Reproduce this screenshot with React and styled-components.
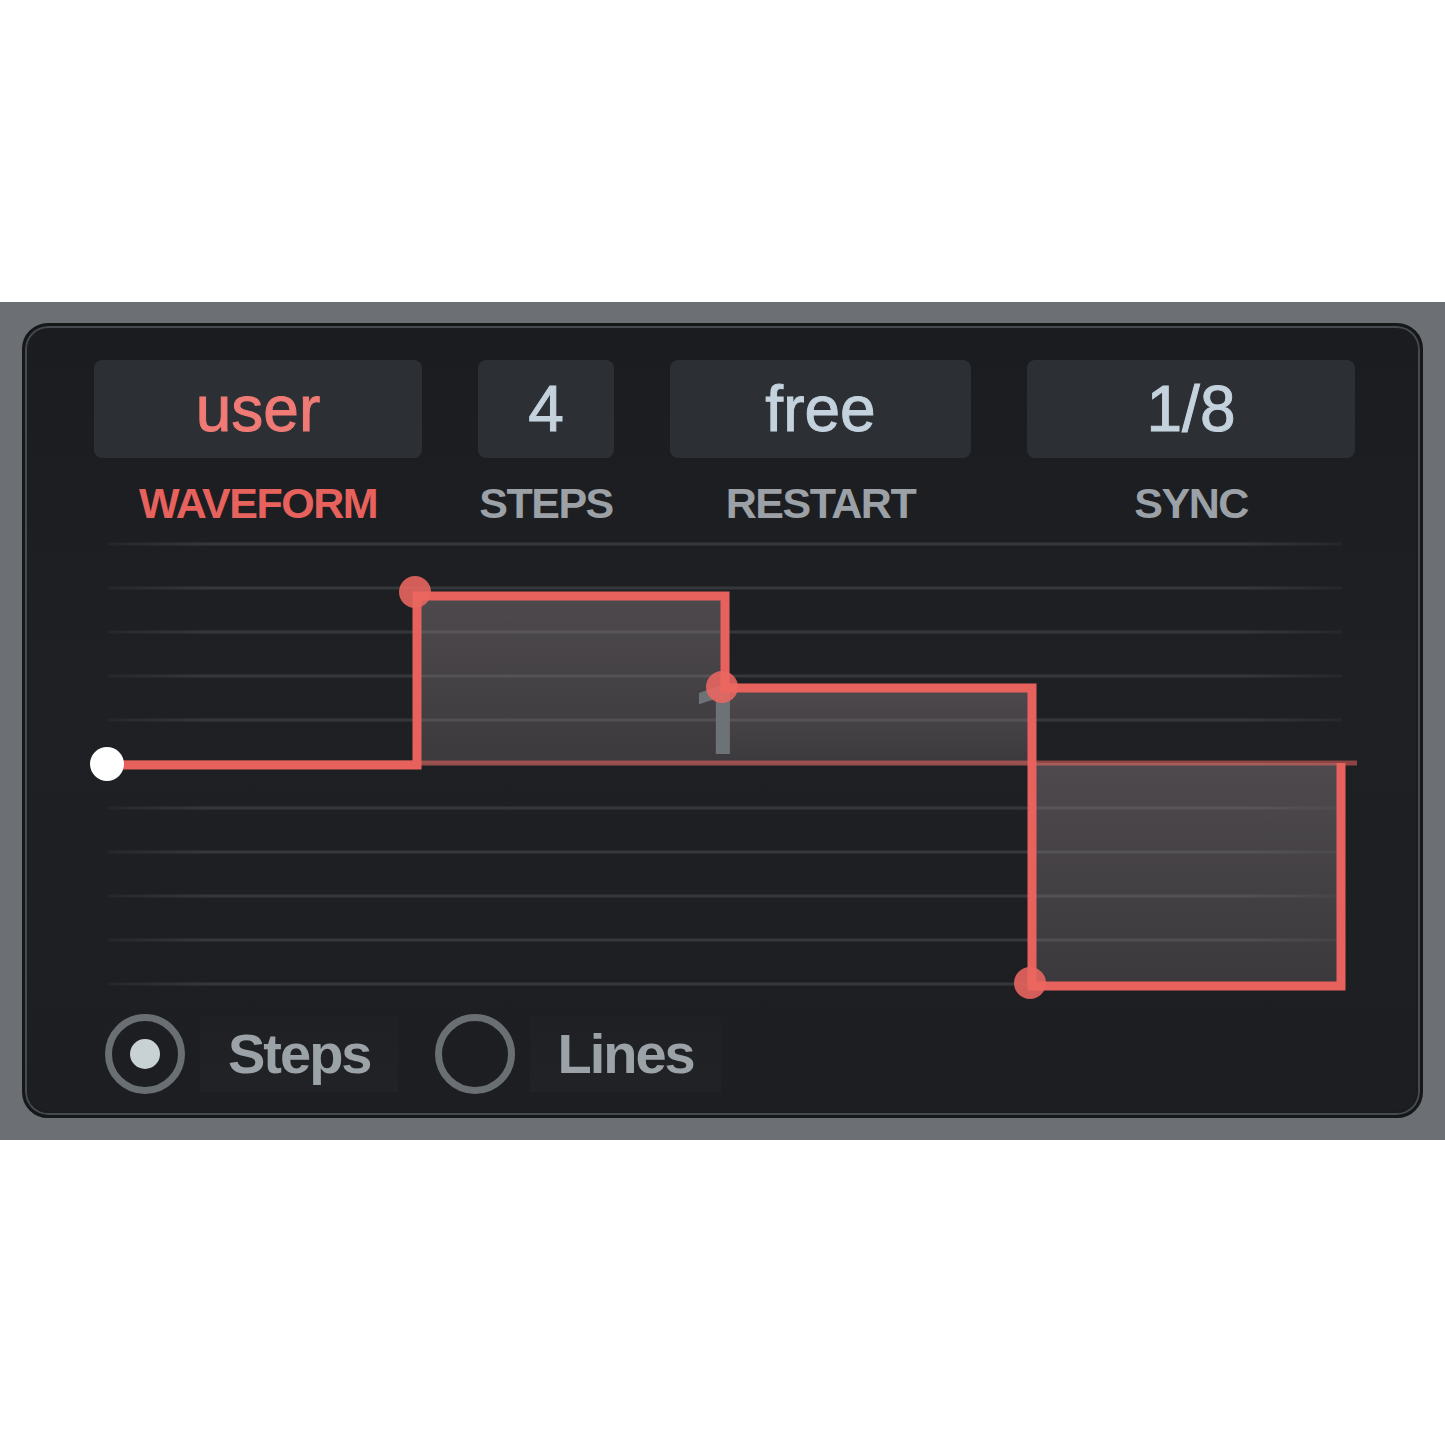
import React from "react";
import styled, { createGlobalStyle } from "styled-components";

const GlobalStyle = createGlobalStyle`
    html, body {
        margin: 0;
        padding: 0;
        background: #ffffff;
    }
    body {
        font-family: "Liberation Sans", Arial, sans-serif;
    }
`;

const CORAL = "#e8625d";

const fields = [
    { value: "user", label: "WAVEFORM", width: 328, active: true },
    { value: "4", label: "STEPS", width: 136 },
    { value: "free", label: "RESTART", width: 301 },
    { value: "1/8", label: "SYNC", width: 328 },
];

// step values are y coordinates of each step's level (page px)
const STEP_X = [107, 417, 725, 1032, 1341];
const STEP_Y = [765, 596, 688, 986];
const ZERO_Y = 763;
const GRID = Array.from({ length: 11 }, (_, i) => 544 + i * 44);

const Band = styled.div`
    margin-top: 302px;
    background: #6c7074;
    padding: 21px 22px 22px;
`;

const Panel = styled.div`
    border: 3px solid #161719;
    border-radius: 26px;
    box-shadow: inset 0 0 0 2px #46494d, inset 0 0 0 4px #1b1c1f;
    background: linear-gradient(180deg, #1b1c1f 0%, #1f2023 45%, #1d1e21 100%);
    padding: 34px 0 21px 65px;
`;

const Header = styled.div`
    display: flex;
    gap: 56px;
    padding-left: 4px;
`;

const Field = styled.div`
    display: flex;
    flex-direction: column;
    align-items: center;
    width: ${(p) => p.$width}px;
`;

const ValueBox = styled.div`
    width: 100%;
    height: 98px;
    border-radius: 8px;
    background: #2c3034;
    display: flex;
    align-items: center;
    justify-content: center;
    font-size: 64px;
    color: ${(p) => (p.$active ? "#f07a75" : "#c4d2de")};
    -webkit-text-stroke: 1px currentColor;
`;

const Label = styled.div`
    margin-top: 21px;
    height: 48px;
    line-height: 48px;
    font-size: 43px;
    font-weight: 700;
    letter-spacing: -1.5px;
    color: ${(p) => (p.$active ? CORAL : "#9ba1a6")};
`;

const Chart = styled.svg`
    display: block;
    width: 1290px;
    height: 480px;
`;

const StepNumber = styled.text`
    font-family: Roboto, "Open Sans", sans-serif;
    font-weight: 700;
    font-size: 100px;
    fill: #6d7276;
`;

const RadioRow = styled.div`
    display: flex;
    align-items: center;
    height: 80px;
    margin-top: 7px;
    padding-left: 15px;
    gap: 37px;
`;

const RadioOption = styled.div`
    display: flex;
    align-items: center;
    gap: 15px;
`;

const RadioCircle = styled.div`
    box-sizing: border-box;
    width: 80px;
    height: 80px;
    border: 7px solid #6a6f73;
    border-radius: 50%;
    display: flex;
    align-items: center;
    justify-content: center;
`;

const RadioDot = styled.div`
    width: 30px;
    height: 30px;
    border-radius: 50%;
    background: #c8d2d4;
`;

const RadioLabel = styled.div`
    height: 76px;
    line-height: 76px;
    padding: 0 27px 0 28px;
    background: linear-gradient(180deg, rgba(255, 255, 255, 0.008), rgba(255, 255, 255, 0.02));
    font-size: 56px;
    font-weight: 700;
    letter-spacing: -2px;
    color: #9ba2a8;
`;

const StepChart = () => {
    const path =
        `M${STEP_X[0]} ${STEP_Y[0]}` +
        STEP_Y.map((y, i) => (i === 0 ? `H${STEP_X[1]}` : `V${y}H${STEP_X[i + 1]}`)).join("") +
        `V${ZERO_Y}`;

    return (
        <Chart viewBox="90 527 1290 480">
            <defs>
                <linearGradient id="gridFade" x1="0" x2="1" y1="0" y2="0">
                    <stop offset="0" stopColor="#35383b" stopOpacity="0.3" />
                    <stop offset="0.08" stopColor="#35383b" stopOpacity="1" />
                    <stop offset="0.92" stopColor="#35383b" stopOpacity="1" />
                    <stop offset="1" stopColor="#35383b" stopOpacity="0.3" />
                </linearGradient>
                <linearGradient id="stepFill" x1="0" x2="0" y1="0" y2="1">
                    <stop offset="0" stopColor="#9a8d93" stopOpacity="0.38" />
                    <stop offset="1" stopColor="#9a8d93" stopOpacity="0.24" />
                </linearGradient>
            </defs>

            {GRID.map((y) => (
                <rect key={y} x="108" y={y - 1.5} width="1234" height="3" fill="url(#gridFade)" />
            ))}

            {STEP_Y.map((y, i) =>
                i === 0 ? null : (
                    <rect
                        key={i}
                        x={STEP_X[i]}
                        y={Math.min(y, ZERO_Y)}
                        width={STEP_X[i + 1] - STEP_X[i]}
                        height={Math.abs(y - ZERO_Y)}
                        fill="url(#stepFill)"
                    />
                )
            )}

            <line x1="107" y1={ZERO_Y} x2="1357" y2={ZERO_Y} stroke={CORAL} strokeOpacity="0.55" strokeWidth="5" />

            <StepNumber x="748" y="754" textAnchor="end">
                1
            </StepNumber>

            <path d={path} fill="none" stroke={CORAL} strokeWidth="9" strokeLinejoin="miter" />

            <circle cx="415" cy="592" r="16" fill="#ec6661" fillOpacity="0.88" />
            <circle cx="722" cy="687" r="16" fill="#ec6661" fillOpacity="0.88" />
            <circle cx="1030" cy="983" r="16" fill="#ec6661" fillOpacity="0.88" />
            <circle cx="107" cy="764" r="17" fill="#ffffff" />
        </Chart>
    );
};

const App = () => (
    <>
        <GlobalStyle />
        <Band>
            <Panel>
                <Header>
                    {fields.map((f) => (
                        <Field key={f.label} $width={f.width}>
                            <ValueBox $active={f.active}>{f.value}</ValueBox>
                            <Label $active={f.active}>{f.label}</Label>
                        </Field>
                    ))}
                </Header>

                <StepChart />

                <RadioRow>
                    <RadioOption>
                        <RadioCircle>
                            <RadioDot />
                        </RadioCircle>
                        <RadioLabel>Steps</RadioLabel>
                    </RadioOption>
                    <RadioOption>
                        <RadioCircle />
                        <RadioLabel>Lines</RadioLabel>
                    </RadioOption>
                </RadioRow>
            </Panel>
        </Band>
    </>
);

export default App;
